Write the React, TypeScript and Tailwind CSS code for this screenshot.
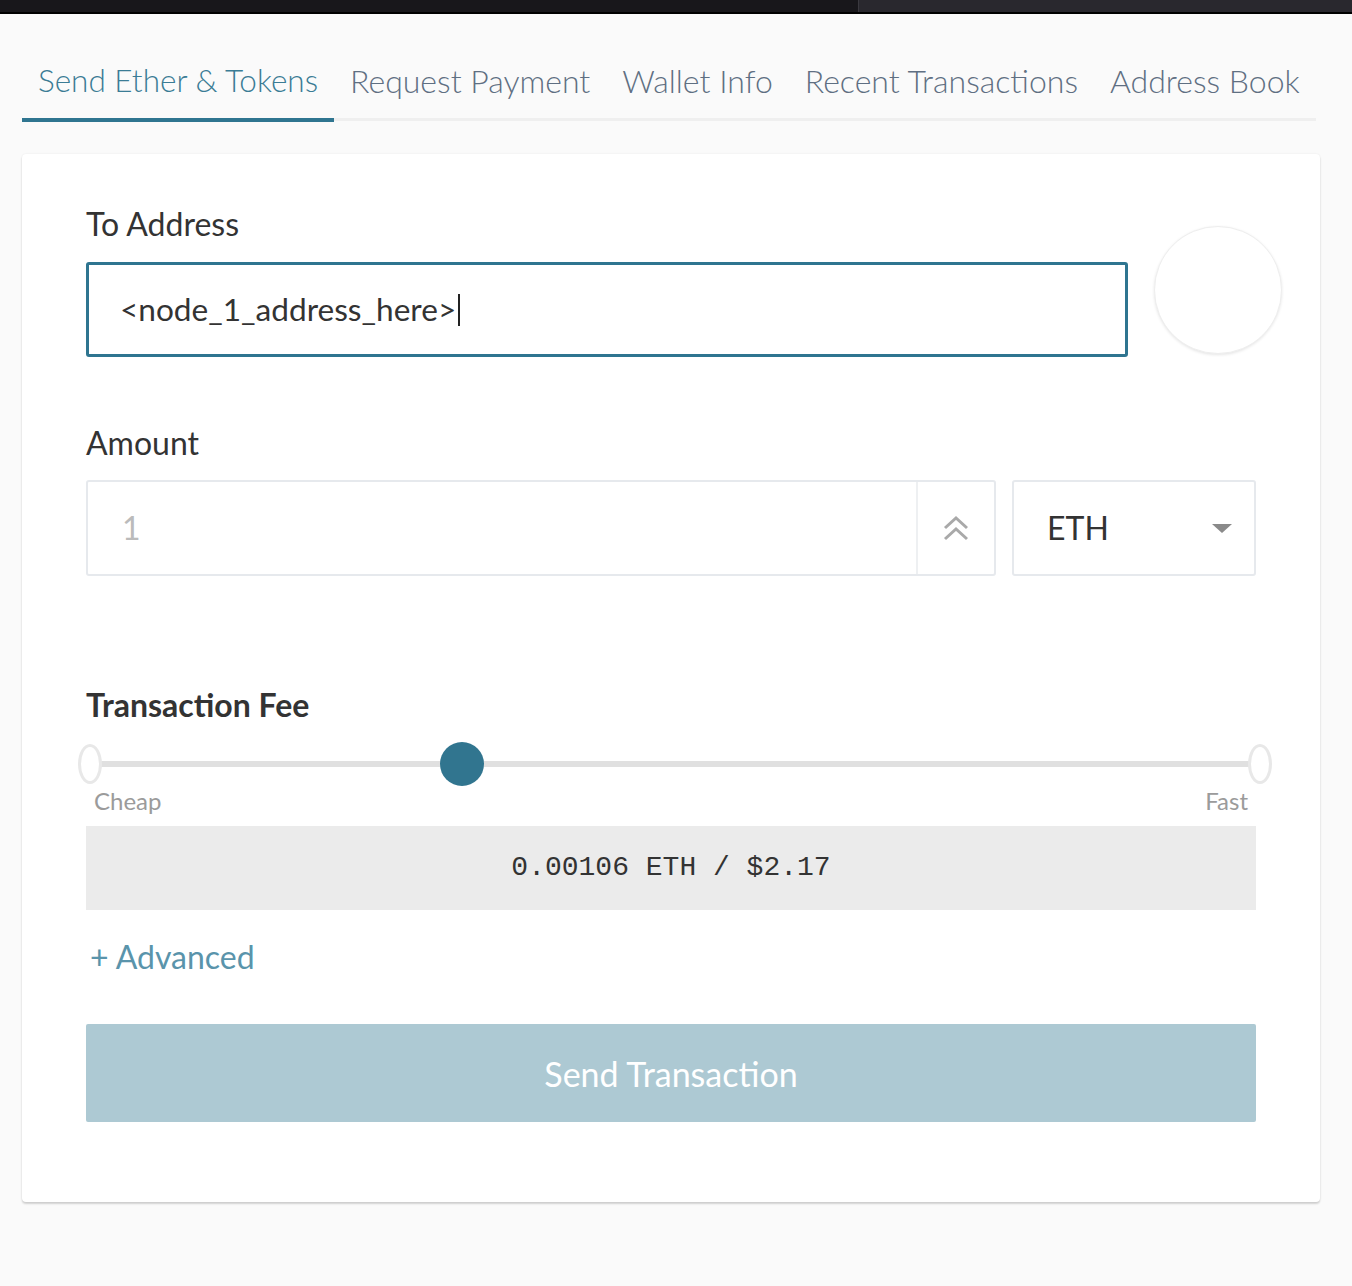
import React from "react";

const tabs = [
  "Send Ether & Tokens",
  "Request Payment",
  "Wallet Info",
  "Recent Transactions",
  "Address Book",
];

function DoubleChevronUp() {
  return (
    <svg width="28" height="26" viewBox="0 0 28 26" fill="none">
      <path d="M3 13 L14 3 L25 13" stroke="#a9a9a9" strokeWidth="3" />
      <path d="M3 24 L14 14 L25 24" stroke="#a9a9a9" strokeWidth="3" />
    </svg>
  );
}

function FeeSlider() {
  return (
    <div className="relative -ml-[8px] -mr-[16px] h-[44px]">
      <div className="absolute left-[20px] right-[20px] top-[19px] h-[6px] bg-[#e0e0e0]" />
      <div className="absolute left-0 top-[2px] h-[40px] w-[24px] rounded-[50%] border-[3px] border-[#e8e8e8] bg-white" />
      <div className="absolute right-0 top-[2px] h-[40px] w-[24px] rounded-[50%] border-[3px] border-[#e8e8e8] bg-white" />
      <div className="absolute left-[362px] top-0 h-[44px] w-[44px] rounded-full bg-[#31758f]" />
    </div>
  );
}

export default function App() {
  return (
    <div className="min-h-[1286px] bg-[#fafafa] font-['Lato','Noto_Sans',sans-serif]">
      <div className="flex h-[14px] border-b-2 border-black">
        <div className="w-[858px] bg-[#18171b]" />
        <div className="w-px bg-[#3a393f]" />
        <div className="flex-1 bg-[#29282e]" />
      </div>

      <nav className="ml-[22px] mt-[47px] flex w-[1292px] items-start">
        {tabs.map((t, i) => (
          <div
            key={t}
            className={
              i === 0
                ? "flex-none whitespace-nowrap border-b-4 border-[#2f7590] px-[16px] pb-[18px] text-[31.5px] font-light leading-[39px] text-[#3b7c95]"
                : "flex-none whitespace-nowrap border-b-[3px] border-[#efefef] px-[16px] pb-[18px] text-[32px] font-light leading-[39px] text-[#5f6f82]"
            }
          >
            {t}
          </div>
        ))}
        <div className="flex-1 border-b-[3px] border-[#efefef] pb-[57px]" />
      </nav>

      <div className="mx-[22px] mt-[32px] w-[1298px] rounded-[4px] bg-white px-[64px] pb-[80px] pt-[52px] shadow-[0_0_2px_rgba(0,0,0,0.08),0_2px_2px_rgba(0,0,0,0.16)]">
        <div className="-mr-[26px] flex items-start">
          <div className="flex-1">
            <div className="text-[32px] leading-[36px] text-[#333]">To Address</div>
            <div className="mt-[20px] flex h-[95px] items-center rounded-[3px] border-[3px] border-[#2f7590] pl-[31px] text-[31.6px] text-[#333]">
              <span>&lt;node_1_address_here&gt;</span>
              <span className="ml-[2px] h-[32px] w-[2px] bg-[#222]" />
            </div>
          </div>
          <div className="ml-[26px] mt-[20px] h-[128px] w-[128px] rounded-full border border-[#eeeeee] bg-white shadow-[0_1px_3px_rgba(0,0,0,0.1)]" />
        </div>

        <div className="mt-[68px] text-[32px] leading-[36px] text-[#333]">Amount</div>
        <div className="mt-[19px] flex h-[96px] gap-[16px]">
          <div className="flex w-[910px] rounded-[3px] border-2 border-[#e6e9ed]">
            <div className="flex flex-1 items-center pl-[34px] text-[32px] text-[#bbbbbb]">1</div>
            <div className="flex w-[78px] items-center justify-center border-l-2 border-[#eef0f2]">
              <DoubleChevronUp />
            </div>
          </div>
          <div className="flex flex-1 items-center justify-between rounded-[3px] border-2 border-[#e6e9ed] pl-[33px] pr-[22px] text-[32px] text-[#333]">
            <span>ETH</span>
            <svg width="20" height="9" viewBox="0 0 20 9">
              <path d="M0 0 L20 0 L10 9 Z" fill="#8a8a8a" />
            </svg>
          </div>
        </div>

        <div className="mt-[111px] text-[32px] font-bold leading-[36px] text-[#333]">Transaction Fee</div>
        <div className="mt-[19px]">
          <FeeSlider />
        </div>
        <div className="mt-[1px] flex justify-between px-[8px] text-[24px] leading-[28px] text-[#9b9b9b]">
          <span>Cheap</span>
          <span>Fast</span>
        </div>
        <div className="mt-[11px] flex h-[84px] items-center justify-center bg-[#ebebeb] font-['Liberation_Mono',monospace] text-[28px] text-[#333]">
          0.00106 ETH / $2.17
        </div>

        <div className="mt-[28px] pl-[4px] text-[32px] leading-[38px] text-[#5a94ab]">+ Advanced</div>

        <div className="mt-[48px] flex h-[98px] items-center justify-center rounded-[2px] bg-[#adc9d3] text-[34px] text-white">
          Send Transaction
        </div>
      </div>
    </div>
  );
}
